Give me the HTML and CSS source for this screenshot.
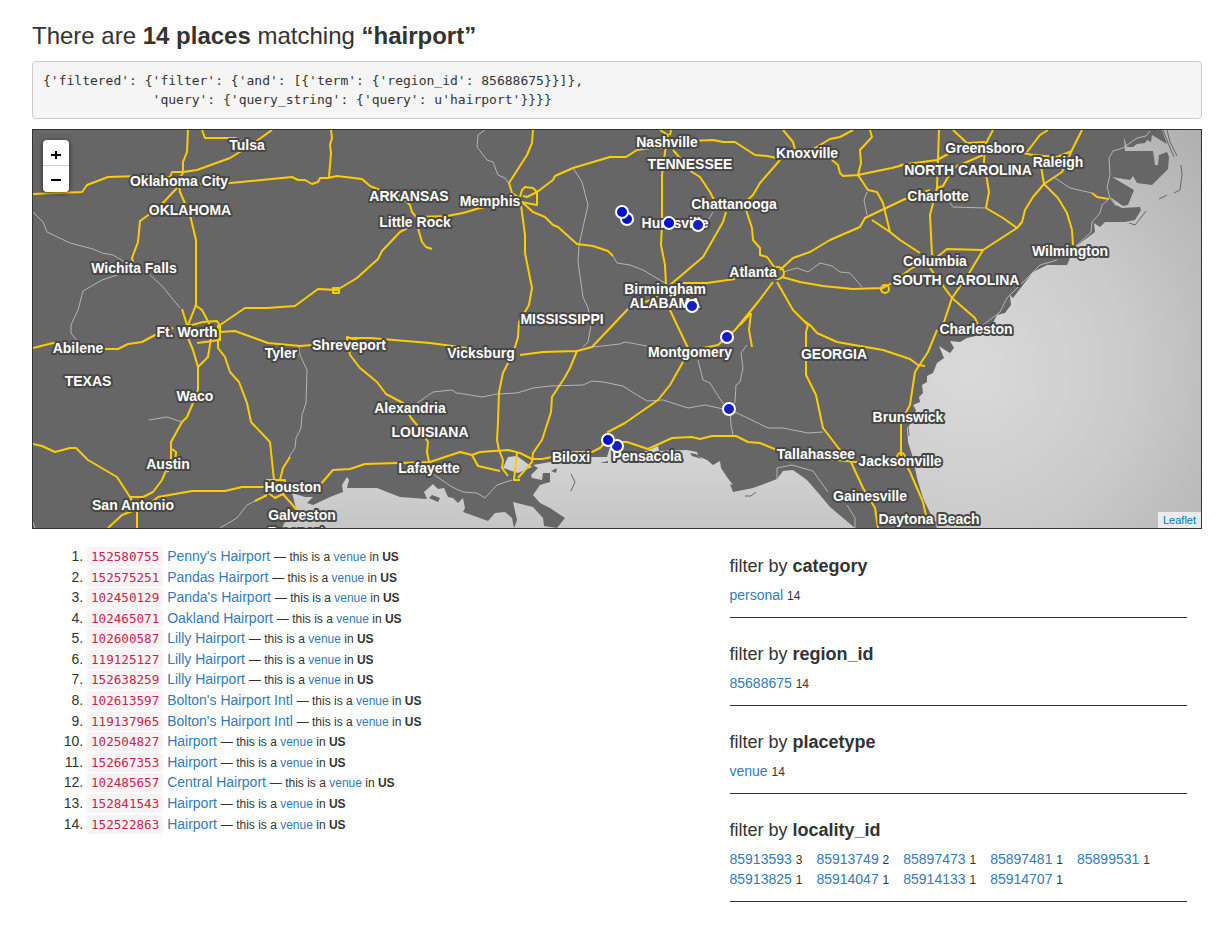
FILE: index.html
```html
<!DOCTYPE html>
<html lang="en">
<head>
<meta charset="utf-8">
<meta name="viewport" content="width=device-width, initial-scale=1">
<title>Places matching “hairport”</title>
<link rel="stylesheet" href="styles.css">
</head>
<body>
<main class="page">
  <h1 class="title">There are <strong>14 places</strong> matching <strong>“hairport”</strong></h1>
  <pre class="query">{'filtered': {'filter': {'and': [{'term': {'region_id': 85688675}}]},
              'query': {'query_string': {'query': u'hairport'}}}}</pre>

  <div class="map">
    <svg class="map-canvas" viewBox="33 130 1168 398" preserveAspectRatio="xMidYMid slice" role="img" aria-label="Map of matching places">
      <defs>
        <radialGradient id="atlantic" gradientUnits="userSpaceOnUse" cx="970" cy="370" r="330">
          <stop offset="0" stop-color="#dadada"/>
          <stop offset="0.5" stop-color="#cacaca"/>
          <stop offset="1" stop-color="#b0b0b0"/>
        </radialGradient>
        <linearGradient id="gulf" gradientUnits="userSpaceOnUse" x1="0" y1="450" x2="0" y2="528">
          <stop offset="0" stop-color="#d4d4d4"/>
          <stop offset="1" stop-color="#c6c6c6"/>
        </linearGradient>
      </defs>
      <rect class="land" x="-400" y="0" width="2000" height="700"/>
      <path fill="url(#atlantic)" d="M1600 130H1162L1167 144 1152 135 1151 142 1147 140 1145 143 1137 144 1133 147H1127L1124 137 1125 151H1153L1155 165H1158L1159 155 1167 152 1169 157 1168 169 1152 185 1137 183 1133 176 1130 180 1112 177 1134 190 1128 205 1123 206 1110 197 1116 205 1122 208 1140 207 1141 210 1135 220 1125 222H1105L1100 227 1094 223 1095 232 1075 247 1070 258 1067 265H1047L1033 272 1023 285 1013 298 1010 295 1011 305 1005 313 997 315 992 325 980 335 967 338 960 342 950 341 954 348 950 353 945 350 939 346 944 358 937 363 933 373 927 376V382L922 385 923 393 919 397 920 402 913 405 916 410 912 422 907 428 908 442 913 458 917 478 923 498 932 517 937 528H1600Z"/>
      <path fill="url(#gulf)" d="M282 528L287 518 297 512 292 493 305 497H313L307 503 313 505 330 497 343 492 342 485 347 477 349 480 347 488H377L400 497 427 499 424 492 433 484 438 489 444 488 448 497 453 498 458 503 463 498 465 508 463 512 488 521 495 513 505 512 512 518 514 528 517 520 513 502 533 507 543 518 544 526 557 528 565 518 550 508 540 503 533 495 540 485 550 482V473H543L542 480 532 478 531 475 538 468 533 465 550 462 560 458 587 457H607L610 447 615 455 647 451 658 446 659 451 687 450 697 452 698 456 707 460 713 465 720 461 721 468 727 477 733 485 730 484 733 492 743 490 753 488 777 479 783 471 793 470 807 480 820 495 830 507 855 528ZM503 468L508 457 517 456 532 467 518 473Z"/>
      <path class="land" d="M429 498L432 495 440 498 438 502ZM551 471L557 468 556 473ZM600 463L608 461V463ZM690 453L696 454 702 459 692 456Z"/>
      <path class="coast" d="M1163 130L1168 143 1174 157M1167 130L1170 142 1177 156M1181 165L1182 175 1180 190 1174 193M1159 199L1167 195M1129 223L1135 225 1146 211M571 474L575 482 571 491M745 496L751 496 756 492M908 425L909 436"/>
      <g class="minor">
        <path d="M33 212L43 222 47 232 70 243 93 249 102 253 113 255 130 265 148 273 163 287 180 308M120 274L102 280 83 291 78 310 71 325V333L77 341M149 420L167 417 182 422M299 347L300 355 307 370 306 403 302 415 301 428 296 438 295 448 289 457M255 501L247 505 237 518 220 528"/>
        <path d="M417 403L433 392 452 390 458 394M458 393L482 397 497 394 517 393 533 388 550 386 583 385 592 381 603 382 623 386 637 395 647 401 663 400 688 408 705 405 728 410 735 412 768 428 783 428 808 433 823 432"/>
        <path d="M698 360L703 380 710 383 722 402 728 408M747 345L741 353 743 368 740 382 736 385 735 402 730 408 731 425 733 435M592 347L620 344 625 342 647 346M430 472L452 487 463 492 477 493 485 498 497 485 512 480"/>
        <path d="M485 130L478 135 477 147 487 160 493 162 498 175 505 178 509 184M573 168L582 182 588 205 579 245 578 262 583 297 588 308 591 325 588 342 583 347M613 256L617 263 630 265 643 270 665 283"/>
        <path d="M783 272L797 268 808 272 820 263 832 266 840 272 850 273 862 287M867 192L864 200 867 215M713 212L707 222M943 193L953 207 986 208M1055 178L1070 188 1092 193M1109 199L1102 205 1100 213 1092 222 1091 232 1075 247M1057 260L1040 265 1023 282 1007 298 1000 312 983 325"/>
        <path d="M1150 131L1146 136 1137 138 1123 148 1113 151 1109 158 1110 175 1107 187 1110 198 1116 206M777 480V468L792 465 813 471 828 492M847 505L855 518V528M33 522L35 528"/>
      </g>
      <g class="highway">
        <path d="M33 194L82 192 87 185 108 177 140 176 158 177 170 177 172 172H183L197 170 230 158 243 150 258 140 272 130M188 130L187 152 183 162V173L178 180 180 192 190 215 196 240V305L188 325M177 188L158 208 140 221 138 242 132 258 133 262M202 130L205 138H235L243 142"/>
        <path d="M197 184L230 183 292 177 298 180H305L312 184 318 182 320 178H328L337 176 362 179 370 186 380 190 400 196 410 205 412 212 417 218 427 217M331 130L332 138 330 145 331 153 329 177M417 225L422 242 426 247 432 249M417 217L447 216 463 213 480 208 505 203 518 200"/>
        <path d="M413 225L400 232 382 251 378 259 357 278 337 290 318 289 295 306 267 308H245L220 325M333 288H339V293H333ZM182 309L187 325M195 305L202 310 210 325M188 326L203 322 217 321 220 326V340L197 343"/>
        <path d="M533 130L532 143 527 155 509 183 512 193 520 198M520 197L522 190 525 187 533 188 537 192V205L521 202M523 196L527 197 537 192 553 180 555 176 573 168 610 157H626L637 150 650 148H667M522 202L533 212 545 217 553 225 558 227 577 244 593 246 608 251 613 256"/>
        <path d="M521 205L525 235V253L532 288 529 305 519 322 518 337 515 347 508 363 503 373 499 392 498 422 497 440 499 450 503 460 502 468 508 476M665 292L650 300 628 309 610 328 592 347 577 351 543 352 520 355M577 351L570 368 565 377 552 397 551 412 542 440 533 453 532 462 518 478"/>
        <path d="M357 340L347 337V343M348 338H370L430 343 467 348M347 338L350 355 360 368 377 382 386 394 403 403 411 418 417 425 428 442 427 452 429 462M220 332L235 331 268 343 300 346 312 345 345 342M33 348L53 343 80 349H118L128 344 142 342 155 335 173 328"/>
        <path d="M188 338L193 350 198 367V390L193 403 187 417 182 422 171 442V458L165 473 162 480 153 492 143 497H130M172 449L176 452 175 465 167 472M211 338L208 357 198 367M218 325V348L225 357 230 372 239 382 247 403 251 422 270 442 274 480M290 457L283 468 280 480M267 480H285V493L275 498 267 492Z"/>
        <path d="M265 487H242L225 491H192L158 497 152 502M300 490L320 485 333 470 350 469 365 464 398 463 430 462 460 452 472 455 480 452 508 450 520 453 532 459H542L552 457 575 452H592L600 448 607 440 608 432 625 423 658 400 670 385 683 362 688 348 677 325 670 310M472 455L478 466 500 471M517 453L514 480M513 480H520"/>
        <path d="M617 442H627L648 449 672 438 692 437 700 439 712 436H736L748 442 760 443 777 450 820 458 855 462 900 463M33 444L42 446 55 452 70 448H76L88 460 117 477 130 497 137 512V528M108 528L122 515 135 510M282 493L297 510M267 495L255 501"/>
        <path d="M660 130L668 135 665 152 662 175V225L661 245 665 265 666 285M671 130L670 135M690 141L713 140 723 142H735L755 155 767 156 777 158M673 150L692 172 700 177 710 192 715 202M780 160L760 183 753 195 745 202 747 213 752 228 753 240 760 248V255L767 257 775 268M726 212L723 222 703 257 670 285M683 283H707L735 279"/>
        <path d="M783 130L793 142 795 150M810 151L830 139 840 137 853 130M832 160L838 165 840 173 843 176 858 175 877 171 892 168 903 165M870 130L872 137 860 150 861 163 858 175 868 190 877 192 883 203 890 232M872 220L890 232 900 240 920 253M780 270L793 258 810 252 830 240 860 227 865 218 905 199 930 190"/>
        <path d="M782 277L800 282 823 286 853 289 883 288 892 283 912 268 930 262M773 282L758 302 735 330 727 337 718 345 698 349M751 313L749 330 752 347M751 313L740 325M777 282L793 310 808 325 806 332V375L816 395 823 428 840 450 850 460 863 488 875 508 878 528M803 320L810 325 817 333 837 342 883 350 910 359 918 365 925 366"/>
        <circle cx="778" cy="273" r="6"/><circle cx="885" cy="289" r="4"/><circle cx="901" cy="457" r="4"/>
        <path d="M939 130L937 188M900 165L937 160 950 153 967 143 985 142M953 130L967 143M993 130L985 145 984 162 989 192 986 208M1048 130L1040 135 1027 152M1082 130L1072 150 1062 172 1044 184 1033 197 1025 210 1022 222 1017 228 983 250 968 275 952 298 943 325M1072 151L1057 157 1033 155 1023 153"/>
        <path d="M1040 160L1044 184 1058 198 1067 213 1072 230 1073 245M937 188L930 215 932 255M986 208L1003 218 1017 228M983 250L947 249 937 257M930 268L952 298 975 318 978 325M937 330L928 352 915 372 910 405 901 422V455L910 472 923 502 927 520M937 188L943 186 953 168 983 155M1092 193L1097 197 1109 199"/>
      </g>
      <g class="labels">
        <text x="247" y="150">Tulsa</text><text x="179" y="186">Oklahoma City</text><text x="190" y="215">OKLAHOMA</text><text x="134" y="273">Wichita Falls</text>
        <text x="409" y="201">ARKANSAS</text><text x="415" y="227">Little Rock</text><text x="490" y="206">Memphis</text><text x="562" y="324">MISSISSIPPI</text>
        <text x="667" y="147">Nashville</text><text x="690" y="169">TENNESSEE</text><text x="807" y="158">Knoxville</text><text x="734" y="209">Chattanooga</text>
        <text x="675" y="228">Huntsville</text><text x="753" y="277">Atlanta</text><text x="665" y="294">Birmingham</text><text x="665" y="308">ALABAMA</text>
        <text x="985" y="153">Greensboro</text><text x="1058" y="167">Raleigh</text><text x="968" y="175">NORTH CAROLINA</text><text x="938" y="201">Charlotte</text>
        <text x="1070" y="256">Wilmington</text><text x="935" y="266">Columbia</text><text x="956" y="285">SOUTH CAROLINA</text><text x="976" y="334">Charleston</text>
        <text x="187" y="337">Ft. Worth</text><text x="78" y="353">Abilene</text><text x="281" y="358">Tyler</text><text x="349" y="350">Shreveport</text>
        <text x="88" y="386">TEXAS</text><text x="195" y="401">Waco</text><text x="168" y="469">Austin</text><text x="133" y="510">San Antonio</text>
        <text x="293" y="492">Houston</text><text x="302" y="520">Galveston</text><text x="296" y="537">Freeport</text><text x="481" y="358">Vicksburg</text>
        <text x="410" y="413">Alexandria</text><text x="430" y="437">LOUISIANA</text><text x="429" y="473">Lafayette</text><text x="571" y="462">Biloxi</text>
        <text x="690" y="357">Montgomery</text><text x="834" y="359">GEORGIA</text><text x="647" y="461">Pensacola</text><text x="816" y="459">Tallahassee</text>
        <text x="908" y="422">Brunswick</text><text x="900" y="466">Jacksonville</text><text x="870" y="501">Gainesville</text><text x="929" y="524">Daytona Beach</text>
      </g>
      <g class="pins">
        <circle cx="627" cy="219" r="6"/><circle cx="622" cy="212" r="6"/><circle cx="669" cy="223" r="6"/>
        <circle class="faded" cx="698" cy="225" r="6"/><circle class="faded" cx="692" cy="306" r="6"/><circle class="faded" cx="727" cy="337" r="6"/>
        <circle class="faded" cx="729" cy="409" r="6"/><circle class="faded" cx="617" cy="446" r="6"/><circle cx="608" cy="440" r="6"/>
      </g>
    </svg>
    <div class="zoom">
      <button type="button" class="zoom-button" aria-label="Zoom in"><svg viewBox="0 0 12 12" width="12" height="12" aria-hidden="true"><path d="M1 7H11M6 3V11"/></svg></button>
      <button type="button" class="zoom-button" aria-label="Zoom out"><svg viewBox="0 0 12 12" width="12" height="12" aria-hidden="true"><path d="M1 6H11"/></svg></button>
    </div>
    <div class="attribution"><a href="#">Leaflet</a></div>
  </div>

  <div class="columns">
    <ol class="results">
      <li><code>152580755</code> <a href="#">Penny's Hairport</a> <small>— this is a <a href="#">venue</a> in <strong>US</strong></small></li>
      <li><code>152575251</code> <a href="#">Pandas Hairport</a> <small>— this is a <a href="#">venue</a> in <strong>US</strong></small></li>
      <li><code>102450129</code> <a href="#">Panda's Hairport</a> <small>— this is a <a href="#">venue</a> in <strong>US</strong></small></li>
      <li><code>102465071</code> <a href="#">Oakland Hairport</a> <small>— this is a <a href="#">venue</a> in <strong>US</strong></small></li>
      <li><code>102600587</code> <a href="#">Lilly Hairport</a> <small>— this is a <a href="#">venue</a> in <strong>US</strong></small></li>
      <li><code>119125127</code> <a href="#">Lilly Hairport</a> <small>— this is a <a href="#">venue</a> in <strong>US</strong></small></li>
      <li><code>152638259</code> <a href="#">Lilly Hairport</a> <small>— this is a <a href="#">venue</a> in <strong>US</strong></small></li>
      <li><code>102613597</code> <a href="#">Bolton's Hairport Intl</a> <small>— this is a <a href="#">venue</a> in <strong>US</strong></small></li>
      <li><code>119137965</code> <a href="#">Bolton's Hairport Intl</a> <small>— this is a <a href="#">venue</a> in <strong>US</strong></small></li>
      <li><code>102504827</code> <a href="#">Hairport</a> <small>— this is a <a href="#">venue</a> in <strong>US</strong></small></li>
      <li><code>152667353</code> <a href="#">Hairport</a> <small>— this is a <a href="#">venue</a> in <strong>US</strong></small></li>
      <li><code>102485657</code> <a href="#">Central Hairport</a> <small>— this is a <a href="#">venue</a> in <strong>US</strong></small></li>
      <li><code>152841543</code> <a href="#">Hairport</a> <small>— this is a <a href="#">venue</a> in <strong>US</strong></small></li>
      <li><code>152522863</code> <a href="#">Hairport</a> <small>— this is a <a href="#">venue</a> in <strong>US</strong></small></li>
    </ol>
    <aside class="filters">
      <section class="facet">
        <h2>filter by <strong>category</strong></h2>
        <ul><li><a href="#">personal</a> <small>14</small></li></ul>
      </section>
      <section class="facet">
        <h2>filter by <strong>region_id</strong></h2>
        <ul><li><a href="#">85688675</a> <small>14</small></li></ul>
      </section>
      <section class="facet">
        <h2>filter by <strong>placetype</strong></h2>
        <ul><li><a href="#">venue</a> <small>14</small></li></ul>
      </section>
      <section class="facet">
        <h2>filter by <strong>locality_id</strong></h2>
        <ul>
          <li><a href="#">85913593</a> <small>3</small></li>
          <li><a href="#">85913749</a> <small>2</small></li>
          <li><a href="#">85897473</a> <small>1</small></li>
          <li><a href="#">85897481</a> <small>1</small></li>
          <li><a href="#">85899531</a> <small>1</small></li>
          <li><a href="#">85913825</a> <small>1</small></li>
          <li><a href="#">85914047</a> <small>1</small></li>
          <li><a href="#">85914133</a> <small>1</small></li>
          <li><a href="#">85914707</a> <small>1</small></li>
        </ul>
      </section>
    </aside>
  </div>
</main>
</body>
</html>
```
FILE: styles.css
```css
* {
  box-sizing: border-box;
}

body {
  margin: 0;
  background: #fff;
  color: #333;
  font-family: "Liberation Sans", Arial, sans-serif;
  font-size: 14px;
  line-height: 20px;
}

a {
  color: #337ab7;
  text-decoration: none;
}

small {
  font-size: 12px;
  line-height: 1;
}

.page {
  padding: 22px 28px 20px 32px;
}

.title {
  margin: 0 0 11px;
  font-size: 24px;
  font-weight: 400;
  line-height: 28px;
}

.query {
  margin: 0 0 10px;
  padding: 9px 10px;
  border: 1px solid #ccc;
  border-radius: 4px;
  background: #f5f5f5;
  font-family: "DejaVu Sans Mono", monospace;
  font-size: 13px;
  line-height: 19px;
  white-space: pre-wrap;
}

/* Map */

.map {
  position: relative;
  height: 400px;
  border: 1px solid #333;
  overflow: hidden;
}

.map-canvas {
  display: block;
  width: 100%;
  height: 100%;
}

.land {
  fill: #666;
}

.coast {
  fill: none;
  stroke: #666;
  stroke-width: 1;
}

.minor {
  fill: none;
  stroke: #b4b4b4;
  stroke-width: 1;
}

.highway {
  fill: none;
  stroke: #fc0;
  stroke-width: 2;
  stroke-linejoin: round;
}

.labels {
  fill: #fff;
  stroke: #484848;
  stroke-width: 4;
  stroke-linejoin: round;
  paint-order: stroke;
  font-size: 14px;
  font-weight: 700;
  text-anchor: middle;
}

.pins {
  fill: #0010cc;
  stroke: #fff;
  stroke-width: 2;
}

.faded {
  fill: #1520bd;
}

.zoom {
  position: absolute;
  top: 10px;
  left: 10px;
  border-radius: 4px;
  box-shadow: 0 1px 5px rgba(0, 0, 0, 0.65);
  overflow: hidden;
}

.zoom-button {
  display: flex;
  align-items: center;
  justify-content: center;
  width: 26px;
  height: 26px;
  padding: 2px 0 0;
  border: 0;
  background: #fff;
}

.zoom-button:first-child {
  border-bottom: 1px solid #ccc;
}

.zoom-button path {
  fill: none;
  stroke: #000;
  stroke-width: 2;
}

.attribution {
  position: absolute;
  right: 0;
  bottom: 0;
  padding: 0 5px;
  background: rgba(255, 255, 255, 0.7);
  font-size: 11px;
  line-height: 16px;
}

.attribution a {
  color: #0078a8;
}

/* Results and filters */

.columns {
  display: grid;
  grid-template-columns: 7fr 5fr;
  padding-top: 1px;
}

.results {
  margin: 16px 0 10px;
  padding: 0 0 0 55px;
  line-height: 1.47;
}

.results code {
  padding: 2px 4px;
  border-radius: 4px;
  background: #f9f2f4;
  color: #c7254e;
  font-family: "DejaVu Sans Mono", monospace;
  font-size: 90%;
  line-height: 1;
}

.filters {
  padding: 0 15px;
}

.facet {
  padding: 26px 0 12px;
  border-bottom: 1px solid #333;
}

.facet h2 {
  margin: 0 0 9px;
  font-size: 18px;
  font-weight: 400;
  line-height: 20px;
}

.facet ul {
  display: flex;
  flex-wrap: wrap;
  gap: 0 14px;
  margin: 0;
  padding: 0;
  list-style: none;
}
```
